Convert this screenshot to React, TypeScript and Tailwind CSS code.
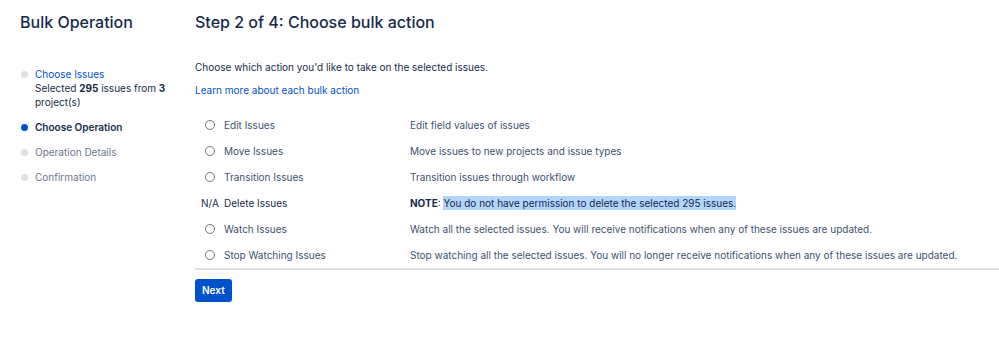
import React from "react"

const STEPS = [
  { name: "Choose Issues", state: "done" },
  { name: "Choose Operation", state: "current" },
  { name: "Operation Details", state: "todo" },
  { name: "Confirmation", state: "todo" },
]

const ACTIONS = [
  { label: "Edit Issues", desc: "Edit field values of issues" },
  { label: "Move Issues", desc: "Move issues to new projects and issue types" },
  { label: "Transition Issues", desc: "Transition issues through workflow" },
  { label: "Delete Issues", desc: "", na: true },
  { label: "Watch Issues", desc: "Watch all the selected issues. You will receive notifications when any of these issues are updated." },
  { label: "Stop Watching Issues", desc: "Stop watching all the selected issues. You will no longer receive notifications when any of these issues are updated." },
]

function Sidebar() {
  return (
    <aside className="w-[175px] shrink-0 pl-5">
      <h1 className="text-[16px] leading-[22px] font-medium text-[#172b4d] pt-[11px]">Bulk Operation</h1>
      <ol className="mt-[34px] flex flex-col gap-[11px]">
        {STEPS.map((s) => (
          <li key={s.name} className="flex items-start text-[10px] leading-[14px]">
            <span
              className={
                "mt-[3.5px] w-[7px] h-[7px] rounded-full shrink-0 mr-[7px] ml-[1px] " +
                (s.state === "current" ? "bg-[#0052cc]" : "bg-[#dfe1e6]")
              }
            />
            <div>
              {s.state === "done" ? (
                <>
                  <div className="text-[#0052cc]">{s.name}</div>
                  <div className="text-[#172b4d]">
                    Selected <b>295</b> issues from <b>3</b>
                    <br />
                    project(s)
                  </div>
                </>
              ) : s.state === "current" ? (
                <div className="font-semibold text-[#172b4d]">{s.name}</div>
              ) : (
                <div className="text-[#6b778c]">{s.name}</div>
              )}
            </div>
          </li>
        ))}
      </ol>
    </aside>
  )
}

export default function App() {
  return (
    <div className="w-[999px] h-[355px] bg-white flex font-['Inter',sans-serif] overflow-hidden">
      <Sidebar />
      <main className="flex-1 pl-[20px]">
        <h2 className="text-[16px] leading-[22px] font-medium text-[#172b4d] pt-[11px]">
          Step 2 of 4: Choose bulk action
        </h2>
        <p className="mt-[27px] text-[10px] leading-[14px] text-[#172b4d]">
          Choose which action you'd like to take on the selected issues.
        </p>
        <a href="#" className="block mt-[9px] text-[10px] leading-[14px] text-[#0052cc]">
          Learn more about each bulk action
        </a>
        <div className="mt-[15px] border-b-2 border-[#dfe1e6]">
          {ACTIONS.map((a) => (
            <div key={a.label} className="flex items-center h-[26px] text-[10px]">
              <div className="w-[215px] flex items-center">
                {a.na ? (
                  <span className="w-[29px] pl-[6px] text-[#172b4d]">N/A</span>
                ) : (
                  <span className="w-[29px] pl-[10px] flex">
                    <span className="w-[10px] h-[10px] rounded-full border border-[#6b778c]" />
                  </span>
                )}
                <span className={a.na ? "text-[#172b4d]" : "text-[#42526e]"}>{a.label}</span>
              </div>
              <div className="text-[#42526e]">
                {a.na ? (
                  <>
                    <b className="text-[#172b4d]">NOTE</b>
                    <span className="text-[#172b4d]">: </span>
                    <span className="bg-[#b3d4fc] text-[#172b4d] py-[1px]">
                      You do not have permission to delete the selected 295 issues.
                    </span>
                  </>
                ) : (
                  a.desc
                )}
              </div>
            </div>
          ))}
        </div>
        <button className="mt-[9px] h-[23px] px-[7px] rounded-[3px] bg-[#0052cc] text-white text-[10px] font-semibold">
          Next
        </button>
      </main>
    </div>
  )
}
